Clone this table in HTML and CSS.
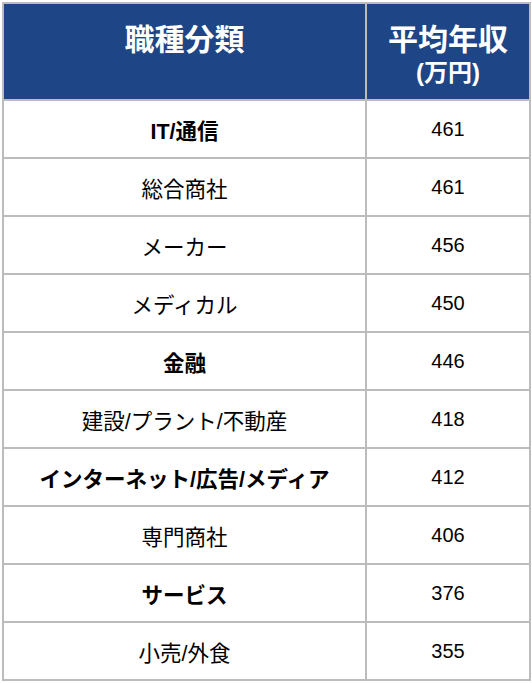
FILE: index.html
```html
<!DOCTYPE html>
<html lang="ja">
<head>
<meta charset="utf-8">
<link rel="stylesheet" href="styles.css">
</head>
<body>
<table class="salary">
  <thead>
    <tr>
      <th class="col-job">職種分類</th>
      <th class="col-pay">平均年収<span class="unit">(万円)</span></th>
    </tr>
  </thead>
  <tbody>
    <tr><td class="job strong">IT/通信</td><td class="pay">461</td></tr>
    <tr><td class="job">総合商社</td><td class="pay">461</td></tr>
    <tr><td class="job">メーカー</td><td class="pay">456</td></tr>
    <tr><td class="job">メディカル</td><td class="pay">450</td></tr>
    <tr><td class="job strong">金融</td><td class="pay">446</td></tr>
    <tr><td class="job">建設/プラント/不動産</td><td class="pay">418</td></tr>
    <tr><td class="job strong">インターネット/広告/メディア</td><td class="pay">412</td></tr>
    <tr><td class="job">専門商社</td><td class="pay">406</td></tr>
    <tr><td class="job strong">サービス</td><td class="pay">376</td></tr>
    <tr><td class="job">小売/外食</td><td class="pay">355</td></tr>
  </tbody>
</table>
</body>
</html>
```

FILE: styles.css
```css
html, body {
  margin: 0;
  padding: 0;
  background: #ffffff;
}

body {
  padding: 2px 3px 0 2px;
  font-family: "Liberation Sans", "Noto Sans CJK JP", sans-serif;
}

.salary {
  width: 527px;
  border-collapse: collapse;
  table-layout: fixed;
}

.salary th,
.salary td {
  border: 2px solid #bcbcbc;
  text-align: center;
  padding: 0;
}

.salary th {
  background: #1e4586;
  color: #ffffff;
  font-weight: bold;
  vertical-align: top;
  height: 97px;
  box-sizing: border-box;
  padding-top: 18px;
  font-size: 30px;
  line-height: 36px;
}

.col-job {
  width: 363px;
}

.col-pay {
  width: 164px;
}

.unit {
  display: block;
  font-size: 24px;
  line-height: 30px;
}

.salary td {
  height: 56px;
  color: #000000;
  vertical-align: middle;
}

.salary td.job {
  font-size: 21.5px;
}

.salary td.pay {
  font-size: 20px;
}

.salary td.strong {
  font-weight: bold;
}
```
